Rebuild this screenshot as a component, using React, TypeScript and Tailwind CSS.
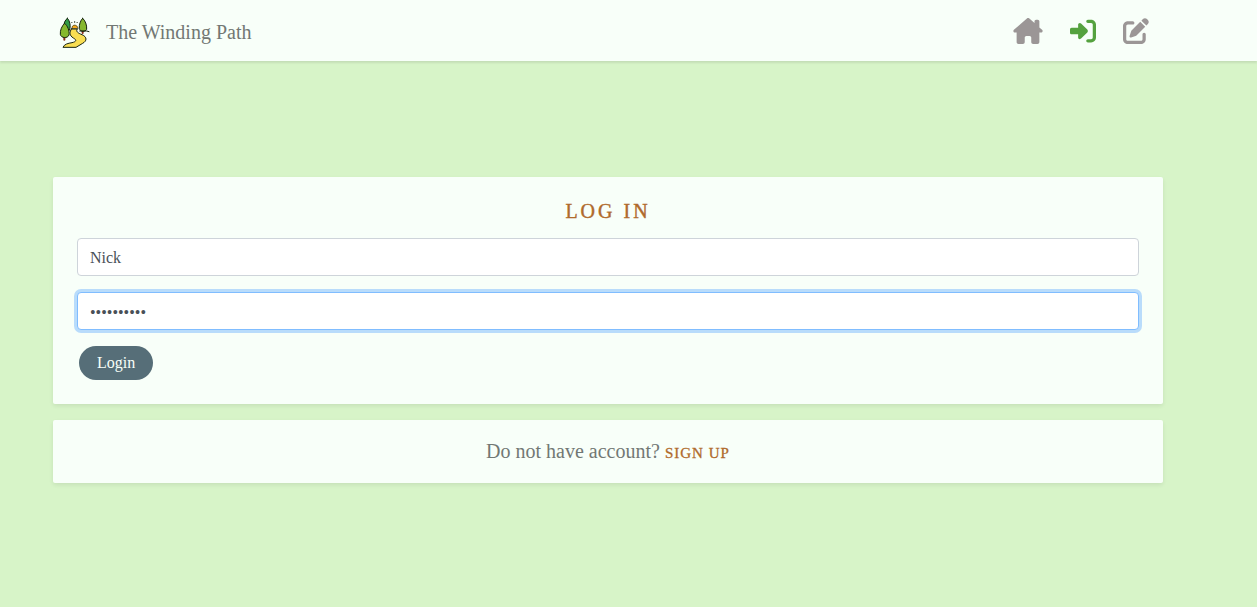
import { useState } from "react";
import { FaHouseChimney, FaPenToSquare, FaRightToBracket } from "react-icons/fa6";

function Logo() {
  return (
    <svg viewBox="24 24 102 102" className="size-[34px]" role="img" aria-label="Winding path logo">
      <g stroke="#17220f" strokeWidth="3" strokeLinejoin="round" strokeLinecap="round">
        <path d="M52 34C45 39 40 50 42 62L50 70H58C63 58 60 41 52 34Z" fill="#2f9b45" />
        <path d="M43 90V98" stroke="#8a2f1c" strokeWidth="6" />
        <path d="M44 49C35 57 30 70 31 82C33 94 53 95 57 84C59 72 53 56 44 49Z" fill="#86b82d" />
        <path d="M98 69V78" stroke="#8a2f1c" strokeWidth="6" />
        <path d="M98 34C91 41 87 53 88 64C90 76 106 75 110 67C111 54 106 41 98 34Z" fill="#86b82d" />
        <path d="M89 72H110L117 74" fill="none" />
        <path d="M66 64C64 52 82 50 84 64Z" fill="#f6a81c" strokeWidth="2" />
        <path
          d="M64 66H82C77 73 83 78 96 83C112 90 111 102 98 109L78 121H39C43 111 54 109 66 107C79 104 81 99 70 93C57 85 59 75 64 66Z"
          fill="#f9de52"
        />
        <path d="M65 46L66 47M74 44V46M82 46L81 47" fill="none" />
      </g>
    </svg>
  );
}

const navLink = "flex items-center justify-center text-[26px]";

export default function App() {
  const [username, setUsername] = useState("Nick");
  const [password, setPassword] = useState("trailhead1");

  return (
    <div className="min-h-screen bg-[#d7f4c8] font-['Liberation_Serif',serif] text-[#727874]">
      <header className="flex h-[61px] items-center justify-between bg-[#f8fff9] pt-0.5 pr-[108px] pl-[58px] shadow-[0_2px_2px_rgba(0,0,0,0.09)]">
        <a href="#home" className="flex items-center gap-[14px] text-xl">
          <Logo />
          The Winding Path
        </a>
        <nav className="flex items-center gap-[27px] pb-0.5 text-[#9b9696]">
          <a href="#home" aria-label="Home" className={navLink}>
            <FaHouseChimney className="w-[30px]" />
          </a>
          <a href="#login" aria-label="Log in" className={`${navLink} text-[#55a23f]`}>
            <FaRightToBracket />
          </a>
          <a href="#signup" aria-label="Sign up" className={navLink}>
            <FaPenToSquare />
          </a>
        </nav>
      </header>

      <main className="flex flex-col gap-4 pt-[116px] pr-[94px] pl-[53px]">
        <section className="rounded-xs bg-[#f8fff9] p-6 shadow-[0_2px_4px_rgba(0,0,0,0.08)]">
          <h1 className="mb-4 text-center text-xl leading-[21px] font-medium tracking-[3px] text-[#b06a2c] uppercase [-webkit-text-stroke:0.4px]">
            Log in
          </h1>
          <form onSubmit={(e) => e.preventDefault()} className="flex flex-col items-start gap-4">
            <input
              type="text"
              aria-label="Username"
              value={username}
              onChange={(e) => setUsername(e.target.value)}
              className="h-[38px] w-full rounded border border-[#ced4da] bg-white px-3 pt-0.5 text-base text-[#495057] outline-none"
            />
            <input
              type="password"
              aria-label="Password"
              value={password}
              onChange={(e) => setPassword(e.target.value)}
              className="h-[38px] w-full rounded border border-[#80bdff] bg-white px-3 pt-1 text-base text-[#495057] ring-3 ring-[#b9dcfb] outline-none"
            />
            <button
              type="submit"
              className="ml-0.5 h-[34px] rounded-full bg-[#566e78] px-[18px] text-base text-[#f8fff9]"
            >
              Login
            </button>
          </form>
        </section>

        <section className="rounded-xs bg-[#f8fff9] p-4 text-center text-xl leading-[31px] shadow-[0_2px_4px_rgba(0,0,0,0.08)]">
          Do not have account?{" "}
          <a
            href="#signup"
            className="text-[15px] leading-none font-medium tracking-[1px] text-[#b06a2c] uppercase [-webkit-text-stroke:0.3px]"
          >
            Sign up
          </a>
        </section>
      </main>
    </div>
  );
}
